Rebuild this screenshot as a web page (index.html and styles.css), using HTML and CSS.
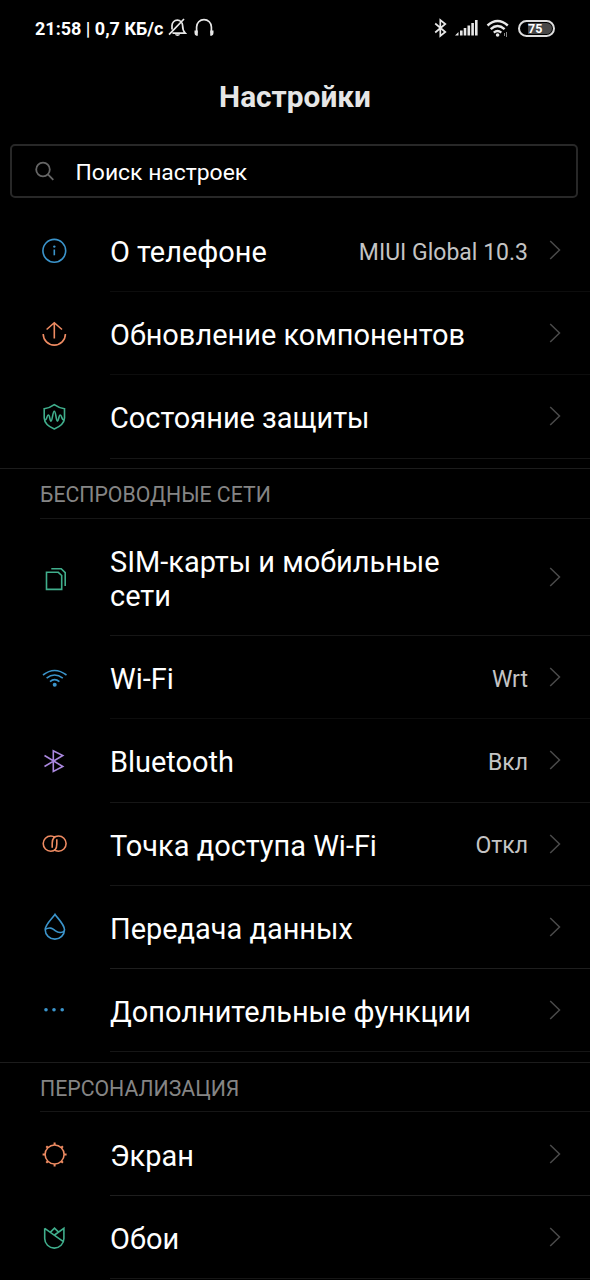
FILE: index.html
```
<!DOCTYPE html>
<html lang="ru">
<head>
<meta charset="utf-8">
<title>Настройки</title>
<link rel="stylesheet" href="styles.css">
</head>
<body>
<svg class="defs" width="0" height="0"><symbol id="chev" viewBox="0 0 12 20"><path d="M1.200 1L10.500 10L1.200 19"/></symbol></svg>
<div class="status">
  <span class="clock">21:58 | 0,7 КБ/с</span>
  <svg class="mute" width="19" height="20" viewBox="0 0 19 20"><path d="M4 11.500V7.500a5.300 5.300 0 0 1 10.600 0c0 4.300 1 6 2.600 7.600H4.500M1 16.600L16 1"/><path class="solid" d="M7 16.300h5c-.5 2.300-4.500 2.300-5 0z"/></svg>
  <svg class="phones" width="20" height="20" viewBox="0 0 20 20"><path d="M2.600 15V9a7.400 7.400 0 0 1 14.800 0v6"/><path class="solid" d="M.5 12.500h3.300v5.300H2.300Q.5 17 .5 15zM19.500 12.500h-3.300v5.300h1.500q1.800-.8 1.800-2.800z"/></svg>
  <span class="grow"></span>
  <svg class="bt" width="13" height="20" viewBox="0 0 13 20"><path d="M1.200 5.500L11.300 14L6.300 18V2L11.300 6L1.200 14.500"/></svg>
  <svg class="signal" width="23" height="18" viewBox="0 0 23 18"><path class="solid" d="M0 16.500l3.500-3.500v3.500zM5 11.500h2.600v5H5zM8.700 9h2.600v7.500H8.700zM12.500 6.500h2.600v10h-2.600zM16.300 4h2.600v12.500h-2.600zM20 1h2.600v15.500H20z"/></svg>
  <svg class="wifi" width="24" height="19" viewBox="0 0 24 19"><path d="M1.500 6.500Q11.500-2.500 21.800 6.500M4.700 10.200Q11.500 4 18.600 10.200M7.800 13.600Q11.500 10.500 15.300 13.600"/><circle class="solid" cx="11.600" cy="16" r="1.800"/><path class="thin" d="M18.500 14v3M20.500 13v5"/></svg>
  <span class="battery"><span class="charge">75</span></span>
</div>
<h1 class="title">Настройки</h1>
<div class="search">
  <svg class="lens" width="20" height="21" viewBox="0 0 20 21"><circle cx="8" cy="8.500" r="6.800"/><path d="M12.900 13.400L18.300 18.900"/></svg>
  <span class="hint">Поиск настроек</span>
</div>

<div class="row faint">
  <svg class="icon blue" viewBox="0 0 30 30"><circle cx="14.300" cy="14.800" r="11.400"/><path d="M14.300 13.500v5.800"/><circle class="dot" cx="14.300" cy="10.600" r="1.200"/></svg>
  <div class="body"><span class="name">О телефоне</span><span class="value">MIUI Global 10.3</span><svg class="chev"><use href="#chev"/></svg></div>
</div>
<div class="row faint">
  <svg class="icon orange" viewBox="0 0 30 30"><path d="M3.200 15a11.100 11.100 0 0 0 22.200 0M14.300 19.500V3.700M6.600 10.500L14.300 3.700L22 10.500"/></svg>
  <div class="body"><span class="name">Обновление компонентов</span><svg class="chev"><use href="#chev"/></svg></div>
</div>
<div class="row">
  <svg class="icon green" viewBox="0 0 30 30"><path d="M14.300 2.700Q19 6.100 24.500 6.800V16Q24.200 22.900 14.300 27Q4.500 22.900 4.200 16V6.800Q9.700 6.100 14.300 2.700z"/><path d="M4.300 18C7.500 18.500 6.500 13 8.300 13S9.600 19.100 11 19.100S12.700 9.200 14.300 9.200S16 19.100 17.400 19.100S18.600 13 20.300 13S21.200 18.500 24.400 18"/></svg>
  <div class="body"><span class="name">Состояние защиты</span><svg class="chev"><use href="#chev"/></svg></div>
</div>

<div class="section"><h2 class="heading">БЕСПРОВОДНЫЕ СЕТИ</h2></div>
<div class="row tall">
  <svg class="icon green" viewBox="0 0 30 30"><path d="M6.500 9.300H18.300L21.700 12.500V26.400H6.500zM11.300 5.700H21.200L25.200 9.700V22.900"/></svg>
  <div class="body"><span class="name">SIM-карты и мобильные<br>сети</span><svg class="chev"><use href="#chev"/></svg></div>
</div>
<div class="row faint">
  <svg class="icon blue" viewBox="0 0 30 30"><path d="M3 12Q14.500 3 26.500 12M6.600 15.100Q14.500 9 22.800 15.100M10 18.600Q14.500 14.600 19.400 18.600"/><circle class="dot" cx="14.700" cy="21.700" r="2"/></svg>
  <div class="body"><span class="name">Wi-Fi</span><span class="value">Wrt</span><svg class="chev"><use href="#chev"/></svg></div>
</div>
<div class="row">
  <svg class="icon purple" viewBox="0 0 30 30"><path d="M4.500 9.500L22.800 20.500L13.300 25.500V4.700L22.800 9.500L4.500 20.500"/></svg>
  <div class="body"><span class="name">Bluetooth</span><span class="value">Вкл</span><svg class="chev"><use href="#chev"/></svg></div>
</div>
<div class="row">
  <svg class="icon orange" viewBox="0 0 30 30"><path d="M12.200 18.800V14.300Q12.200 7 18.500 7A7.600 7.600 0 0 1 18.500 22.200Q15.800 22.200 14 20.600M16.800 10.300V14.900Q16.800 22.200 10.800 22.200A7.600 7.600 0 0 1 10.800 7Q13.200 7 15 8.500"/></svg>
  <div class="body"><span class="name">Точка доступа Wi-Fi</span><span class="value">Откл</span><svg class="chev"><use href="#chev"/></svg></div>
</div>
<div class="row bright">
  <svg class="icon blue" viewBox="0 0 30 30"><path d="M15 2.300C12.500 6.300 5.200 12.300 5.200 17.800A9.500 9.200 0 0 0 24.500 17.800C24.500 12.300 17.500 6.300 15 2.300zM5.300 17.400C10.500 14.300 13 17.100 15.500 18.800S22 21.300 24.400 18.800"/></svg>
  <div class="body"><span class="name">Передача данных</span><svg class="chev"><use href="#chev"/></svg></div>
</div>
<div class="row">
  <svg class="icon blue" viewBox="0 0 30 30"><circle class="dot" cx="6" cy="14.800" r="1.800"/><circle class="dot" cx="14" cy="14.800" r="1.800"/><circle class="dot" cx="22.200" cy="14.800" r="1.800"/></svg>
  <div class="body"><span class="name">Дополнительные функции</span><svg class="chev"><use href="#chev"/></svg></div>
</div>

<div class="section"><h2 class="heading">ПЕРСОНАЛИЗАЦИЯ</h2></div>
<div class="row bright">
  <svg class="icon orange" viewBox="0 0 30 30"><circle cx="14.600" cy="15.500" r="9.500"/><path class="rays" d="M14.600 6V3.500M14.600 25v2.500M5.100 15.500H2.600M24.100 15.500h2.500M7.900 8.800L6.300 7.200M21.300 8.800l1.600-1.600M7.900 22.200l-1.600 1.600M21.300 22.200l1.600 1.600"/></svg>
  <div class="body"><span class="name">Экран</span><svg class="chev"><use href="#chev"/></svg></div>
</div>
<div class="row">
  <svg class="icon green" viewBox="0 0 30 30"><path d="M4.700 6.300V16.500a9.600 9.600 0 0 0 19.200 0V6.300L14.500 13M4.700 6.300L23 19.300M10.700 9.900L14.500 6.100L18.300 9.900"/></svg>
  <div class="body"><span class="name">Обои</span><svg class="chev"><use href="#chev"/></svg></div>
</div>
</body>
</html>
```
FILE: styles.css
```
* { box-sizing: border-box; }
html { background: #000; }
body {
  margin: 0;
  width: 590px;
  height: 1280px;
  overflow: hidden;
  background: #000;
  color: #fff;
  font-family: Roboto, "Noto Sans", sans-serif;
}
svg { flex: none; fill: none; stroke: currentColor; }
.defs { display: block; }
.status {
  display: flex;
  align-items: center;
  height: 56px;
  padding: 0 35px;
  color: #e8e8e8;
}
.clock {
  width: 128px;
  margin-right: 5px;
  padding-top: 1px;
  font-size: 18px;
  font-weight: 700;
  color: #fff;
  white-space: nowrap;
}
.mute, .phones { stroke-width: 1.7; }
.phones { margin-left: 7px; }
.solid { fill: currentColor; stroke: none; }
.grow { flex: 1; }
.bt { stroke-width: 1.7; margin-right: 8px; }
.signal { margin-right: 8px; }
.wifi { stroke-width: 2.4; margin-right: 8px; }
.thin { stroke-width: 1; color: #888; }
.battery {
  width: 37px;
  height: 17px;
  padding: 1px;
  border: 2px solid #ddd;
  border-radius: 9px;
  display: flex;
  justify-content: flex-end;
}
.charge {
  width: 24px;
  padding-right: 9px;
  background: #484848;
  border-radius: 0 6px 6px 0;
  font-size: 12.5px;
  line-height: 12px;
  font-weight: 700;
  color: #fff;
}
.title {
  margin: 0;
  height: 88px;
  padding-top: 23px;
  font-size: 29.8px;
  line-height: 36px;
  font-weight: 700;
  text-align: center;
  color: #e6e6e6;
}
.search {
  display: flex;
  align-items: center;
  height: 54px;
  margin: 0 12px 11px 10px;
  padding: 0 0 0 23px;
  border: 2px solid #282828;
  border-radius: 5px;
  font-size: 22.9px;
}
.hint { padding-top: 2px; }
.lens { color: #666; stroke-width: 1.8; margin-right: 20.5px; }
.row { display: flex; align-items: center; height: 83.2px; padding-left: 40px; }
.tall { height: 117.2px; }
.icon { width: 30px; height: 30px; margin-right: 40px; stroke-width: 1.6; }
.dot { fill: currentColor; stroke: none; }
.blue { color: #3b94cb; }
.orange { color: #ee8b62; }
.green { color: #40ae8c; }
.purple { color: #ab88df; }
.rays { stroke-width: 2; }
.body {
  flex: 1;
  align-self: stretch;
  display: flex;
  align-items: center;
  padding-right: 29px;
  border-bottom: 1px solid #161616;
}
.faint .body { border-bottom-color: #0d0d0d; }
.bright .body { border-bottom-color: #1e1e1e; }
.name { flex: 1; padding-top: 4px; font-size: 28.95px; line-height: 34px; white-space: nowrap; }
.value { padding-top: 4px; margin-right: 21px; font-size: 23px; color: #c4c4c4; white-space: nowrap; }
.chev { width: 12px; height: 20px; color: #4a4a4a; stroke-width: 1.5; }
.section {
  height: 50.7px;
  margin-top: 9.7px;
  padding-left: 40px;
  border-top: 1px solid #1c1c1c;
}
.heading {
  margin: 0;
  height: 100%;
  padding-top: 12px;
  border-bottom: 1px solid #161616;
  font-size: 21.25px;
  line-height: 28px;
  font-weight: 400;
  color: #858585;
}
```
